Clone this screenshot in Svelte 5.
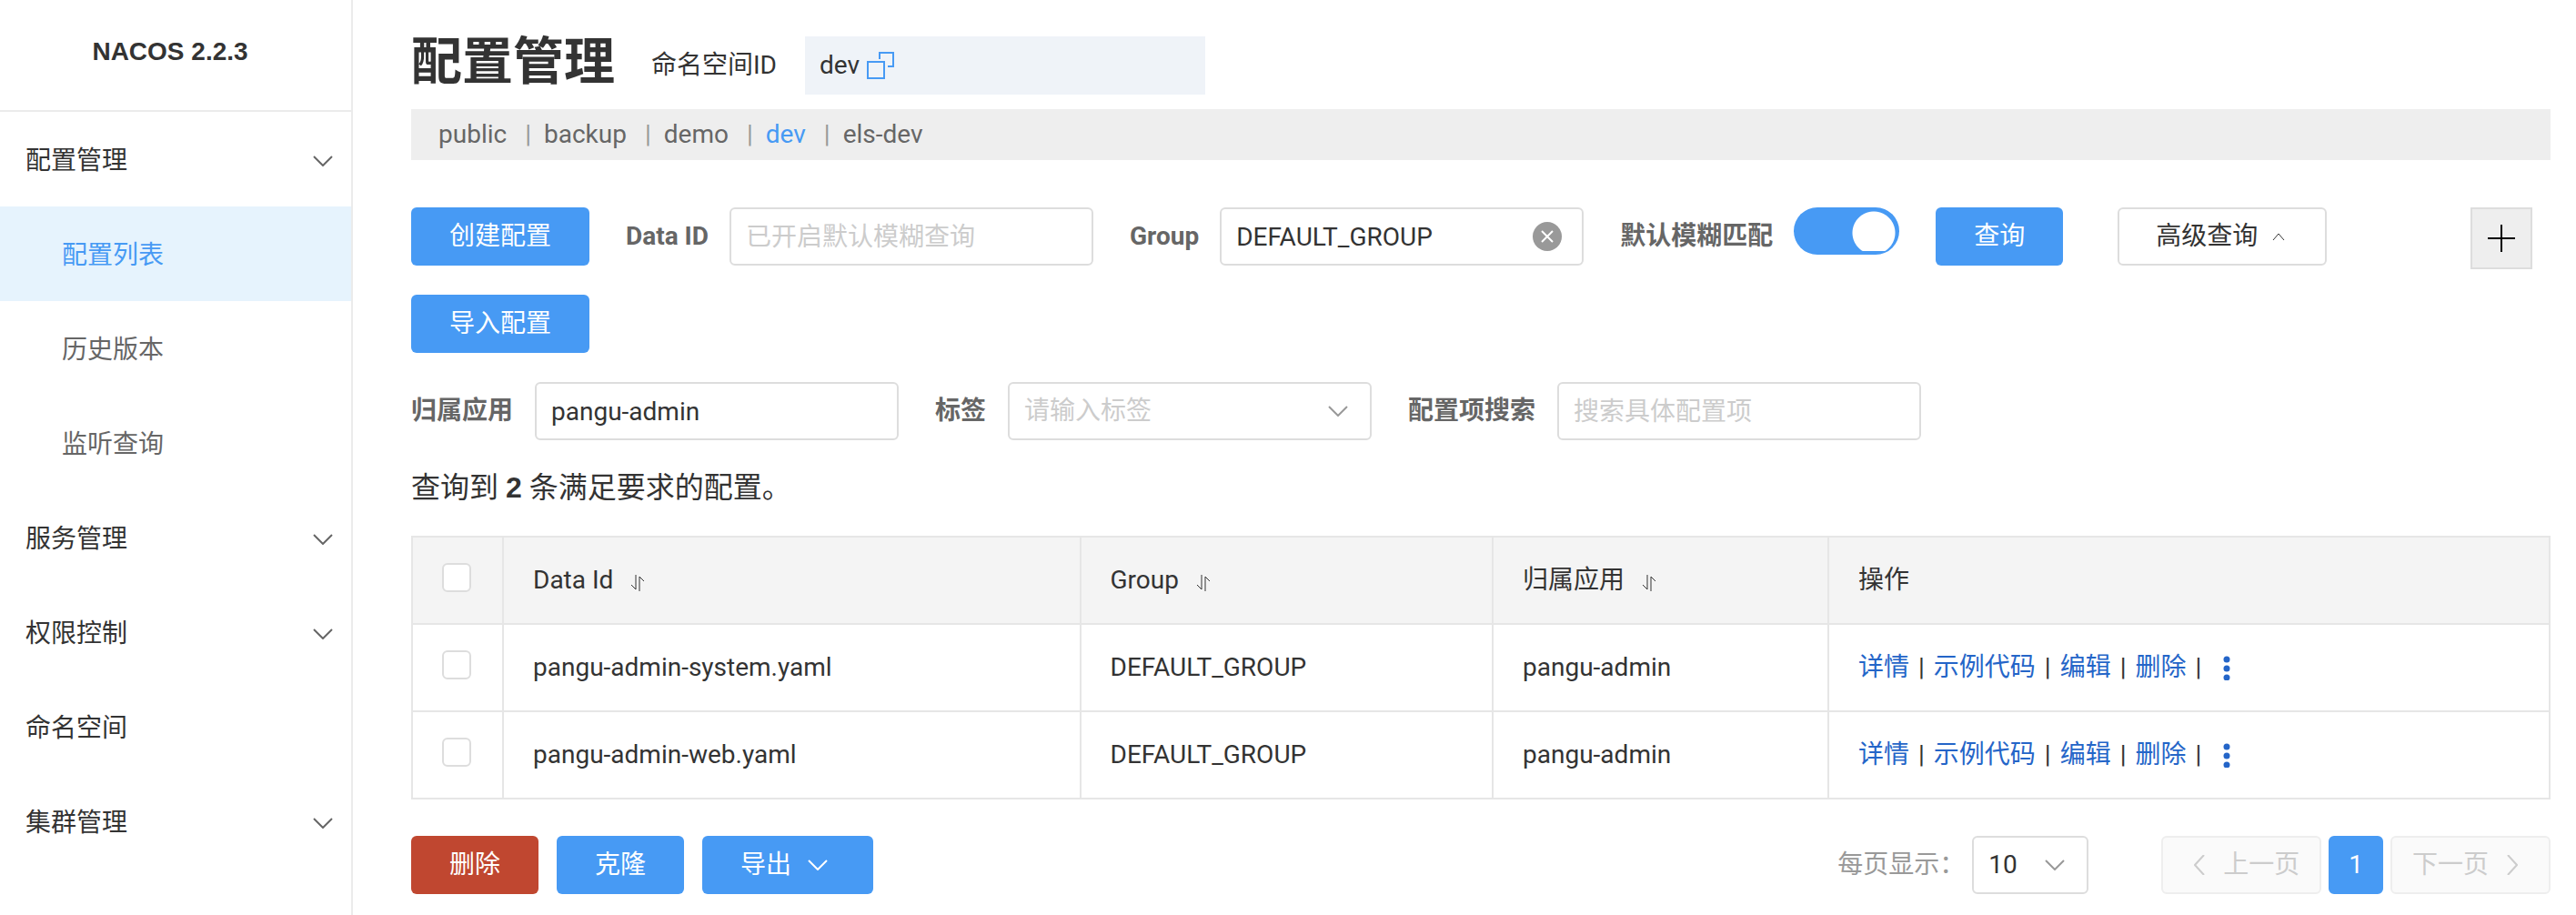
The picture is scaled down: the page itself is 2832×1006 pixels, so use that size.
<script>
  const menu = [
    { label: '配置管理', open: true, children: ['配置列表', '历史版本', '监听查询'] },
    { label: '服务管理', children: [] },
    { label: '权限控制', children: [] },
    { label: '命名空间' },
    { label: '集群管理', children: [] }
  ];
  const activeItem = '配置列表';

  const namespaces = ['public', 'backup', 'demo', 'dev', 'els-dev'];
  const current = 'dev';

  const rows = [
    { dataId: 'pangu-admin-system.yaml', group: 'DEFAULT_GROUP', app: 'pangu-admin' },
    { dataId: 'pangu-admin-web.yaml', group: 'DEFAULT_GROUP', app: 'pangu-admin' }
  ];
  const actions = ['详情', '示例代码', '编辑', '删除'];

  let dataId = $state('');
  let group = $state('DEFAULT_GROUP');
  let app = $state('pangu-admin');
  let detail = $state('');
  let fuzzy = $state(true);
</script>

{#snippet chevron()}
  <svg class="chevron" viewBox="0 0 22 12" aria-hidden="true"><path d="M1 1 L11 11 L21 1" /></svg>
{/snippet}

{#snippet sortIcon()}
  <button class="sort" aria-label="排序">
    <svg viewBox="0 0 16 18" aria-hidden="true"><path d="M6 0 V16 L1 11 M10 18 V2 L15 7" /></svg>
  </button>
{/snippet}

<div class="layout">
  <aside class="sidebar">
    <h1 class="brand">NACOS 2.2.3</h1>
    <nav>
      <ul class="menu">
        {#each menu as item}
          <li>
            <a class="item" href="#menu">
              <span>{item.label}</span>
              {#if item.children}{@render chevron()}{/if}
            </a>
            {#if item.open}
              <ul class="menu">
                {#each item.children as child}
                  <li>
                    <a class="item child" class:active={child === activeItem} href="#menu">{child}</a>
                  </li>
                {/each}
              </ul>
            {/if}
          </li>
        {/each}
      </ul>
    </nav>
  </aside>

  <main>
    <header class="title-row">
      <h2>配置管理</h2>
      <span class="ns-label">命名空间ID</span>
      <div class="ns-box">
        <span>dev</span>
        <button class="copy" aria-label="复制">
          <svg viewBox="0 0 30 30" aria-hidden="true">
            <path d="M1 11 H19 V29 H1 Z M14 8 V1 H29 V16 H23" />
          </svg>
        </button>
      </div>
    </header>

    <nav class="ns-bar">
      {#each namespaces as ns, i}
        {#if i > 0}<span class="bar">|</span>{/if}
        <a href="#ns" class:active={ns === current}>{ns}</a>
      {/each}
    </nav>

    <form class="filters" onsubmit={(e) => e.preventDefault()}>
      <div class="row">
        <div class="stack">
          <button type="button" class="btn primary">创建配置</button>
          <button type="button" class="btn primary">导入配置</button>
        </div>
        <div class="field">
          <label for="data-id">Data ID</label>
          <input id="data-id" class="text" placeholder="已开启默认模糊查询" bind:value={dataId} />
        </div>
        <div class="field">
          <label for="group">Group</label>
          <div class="control">
            <input id="group" class="text" bind:value={group} />
            <button type="button" class="clear" aria-label="清除" onclick={() => (group = '')}>
              <svg viewBox="0 0 32 32" aria-hidden="true">
                <circle cx="16" cy="16" r="16" />
                <path d="M10 10 L22 22 M22 10 L10 22" />
              </svg>
            </button>
          </div>
        </div>
        <div class="field">
          <label for="fuzzy">默认模糊匹配</label>
          <input id="fuzzy" type="checkbox" role="switch" class="switch" bind:checked={fuzzy} />
        </div>
        <button class="btn primary">查询</button>
        <button type="button" class="btn advanced">
          高级查询
          <svg class="caret" viewBox="0 0 14 10" aria-hidden="true"><path d="M1 9 L7 2 L13 9" /></svg>
        </button>
        <button type="button" class="plus" aria-label="新建">
          <svg viewBox="0 0 30 30" aria-hidden="true"><path d="M15 0 V30 M0 15 H30" /></svg>
        </button>
      </div>

      <div class="row second">
        <div class="field">
          <label for="app">归属应用</label>
          <input id="app" class="text" bind:value={app} />
        </div>
        <div class="field">
          <label for="tags">标签</label>
          <div class="control">
            <select id="tags" class="text empty">
              <option>请输入标签</option>
            </select>
            {@render chevron()}
          </div>
        </div>
        <div class="field">
          <label for="detail">配置项搜索</label>
          <input id="detail" class="text" placeholder="搜索具体配置项" bind:value={detail} />
        </div>
      </div>
    </form>

    <p class="count">查询到 <strong>{rows.length}</strong> 条满足要求的配置。</p>

    <table>
      <colgroup>
        <col class="c-check" />
        <col class="c-id" />
        <col class="c-group" />
        <col class="c-app" />
        <col />
      </colgroup>
      <thead>
        <tr>
          <th class="check"><input type="checkbox" aria-label="全选" /></th>
          <th>Data Id {@render sortIcon()}</th>
          <th>Group {@render sortIcon()}</th>
          <th>归属应用 {@render sortIcon()}</th>
          <th>操作</th>
        </tr>
      </thead>
      <tbody>
        {#each rows as row}
          <tr>
            <td class="check"><input type="checkbox" aria-label={row.dataId} /></td>
            <td>{row.dataId}</td>
            <td>{row.group}</td>
            <td>{row.app}</td>
            <td>
              <div class="actions">
                {#each actions as action}
                  <a href="#action">{action}</a><span>|</span>
                {/each}
                <button class="more" aria-label="更多">
                  <svg viewBox="0 0 8 28" aria-hidden="true">
                    <circle cx="4" cy="5" r="3.5" /><circle cx="4" cy="15" r="3.5" /><circle cx="4" cy="25" r="3.5" />
                  </svg>
                </button>
              </div>
            </td>
          </tr>
        {/each}
      </tbody>
    </table>

    <footer>
      <button class="btn danger">删除</button>
      <button class="btn primary">克隆</button>
      <button class="btn primary export">导出 {@render chevron()}</button>
      <div class="pager">
        <label for="size">每页显示：</label>
        <div class="control size">
          <select id="size" class="text"><option>10</option></select>
          {@render chevron()}
        </div>
        <button class="page prev" disabled>
          <svg viewBox="0 0 12 22" aria-hidden="true"><path d="M11 0 L1 11 L11 22" /></svg>
          上一页
        </button>
        <button class="page current" aria-current="page">1</button>
        <button class="page next" disabled>
          下一页
          <svg viewBox="0 0 12 22" aria-hidden="true"><path d="M1 0 L11 11 L1 22" /></svg>
        </button>
      </div>
    </footer>
  </main>
</div>

<style>
  :global(body) {
    background: #fff;
  }

  .layout,
  .layout * {
    box-sizing: border-box;
  }

  .layout {
    display: flex;
    min-height: 100vh;
    color: #333;
    font: 400 28px/36px Roboto, 'Noto Sans CJK SC', sans-serif;
  }

  button,
  input,
  select {
    margin: 0;
    padding: 0;
    border: 0;
    background: none;
    color: inherit;
    font: inherit;
  }

  button {
    cursor: pointer;
  }

  a {
    color: inherit;
    text-decoration: none;
  }

  svg {
    display: block;
    fill: none;
    stroke: currentColor;
    stroke-width: 2px;
  }

  .chevron {
    flex: none;
    width: 22px;
    height: 12px;
  }

  /* Sidebar */
  .sidebar {
    flex: none;
    width: 388px;
    border-right: 2px solid #ebebeb;
  }

  .brand {
    margin: 0;
    padding: 39px 12px 46px 0;
    border-bottom: 2px solid #ebebeb;
    font-family: 'Liberation Sans', sans-serif;
    font-size: 28px;
    font-weight: 700;
    text-align: center;
  }

  .menu {
    margin: 0;
    padding: 0;
    list-style: none;
  }

  .item {
    display: flex;
    align-items: center;
    justify-content: space-between;
    height: 104px;
    padding: 4px 20px 0 28px;
  }

  .item .chevron {
    color: #666;
  }

  .child {
    padding-left: 68px;
    color: #666;
  }

  .child.active {
    background: #e6f3fd;
    color: #479af4;
  }

  /* Heading */
  main {
    flex: 1;
    min-width: 0;
    padding: 40px 28px 20px 64px;
  }

  .title-row {
    display: flex;
    align-items: center;
    height: 64px;
  }

  h2 {
    margin: 0 40px 8px 0;
    font-size: 56px;
    line-height: 64px;
    font-weight: 700;
  }

  .ns-label {
    margin-right: 31px;
  }

  .ns-box {
    display: flex;
    align-items: center;
    gap: 8px;
    width: 440px;
    height: 64px;
    padding: 0 16px;
    background: #eff3f8;
  }

  .copy {
    color: #479af4;
  }

  .copy svg {
    width: 30px;
    height: 30px;
  }

  .ns-bar {
    display: flex;
    align-items: center;
    height: 56px;
    margin-top: 16px;
    padding: 0 30px;
    background: #eee;
    color: #666;
  }

  .bar {
    margin: 0 14px 0 20px;
    color: #999;
  }

  .ns-bar .active {
    color: #479af4;
  }

  /* Filters */
  .filters {
    margin-top: 52px;
  }

  .row {
    display: flex;
    align-items: flex-start;
    gap: 40px;
  }

  .stack {
    display: grid;
    gap: 32px;
  }

  .field {
    display: flex;
    gap: 23px;
  }

  .second {
    margin-top: 32px;
  }

  .second .field {
    gap: 24px;
  }

  .field label {
    color: #666;
    font-weight: 700;
    line-height: 64px;
  }

  .text {
    width: 400px;
    height: 64px;
    padding: 0 16px;
    border: 2px solid #ddd;
    border-radius: 6px;
    background: #fff;
    color: #333;
    appearance: none;
  }

  .text::placeholder,
  .text.empty {
    color: #ccc;
    opacity: 1;
  }

  .control {
    display: grid;
    align-items: center;
  }

  .control > * {
    grid-area: 1 / 1;
  }

  .control .chevron {
    justify-self: end;
    margin-right: 26px;
    color: #999;
    pointer-events: none;
  }

  .clear {
    justify-self: end;
    margin-right: 24px;
  }

  .clear svg {
    width: 32px;
    height: 32px;
    stroke: #fff;
  }

  .clear circle {
    fill: #999;
    stroke: none;
  }

  .switch {
    display: flex;
    justify-content: flex-end;
    width: 116px;
    height: 52px;
    padding: 4px;
    border-radius: 26px;
    background: #479af4;
    appearance: none;
    cursor: pointer;
  }

  .switch::before {
    content: '';
    width: 48px;
    height: 44px;
    background: radial-gradient(circle at 24px 24px, #fff 23px, transparent 24px);
  }

  .btn {
    display: flex;
    align-items: center;
    justify-content: center;
    gap: 18px;
    height: 64px;
    padding: 0 42px;
    border-radius: 6px;
  }

  .primary {
    background: #479af4;
    color: #fff;
  }

  .danger {
    background: #c04730;
    color: #fff;
  }

  .export {
    padding-right: 50px;
  }

  .advanced {
    gap: 16px;
    margin-left: 20px;
    padding: 0 44px 0 40px;
    border: 2px solid #ddd;
  }

  .caret {
    width: 14px;
    height: 10px;
    stroke-width: 1px;
  }

  .plus {
    display: grid;
    place-items: center;
    width: 68px;
    height: 68px;
    margin: 0 20px 0 auto;
    border: 2px solid #ddd;
    background: #eee;
    color: #000;
  }

  .plus svg {
    width: 30px;
    height: 30px;
  }

  /* Result table */
  .count {
    margin: 32px 0;
    font-size: 32px;
    line-height: 41px;
  }

  .count strong {
    font-family: 'Liberation Sans', sans-serif;
  }

  table {
    width: 100%;
    table-layout: fixed;
    border-collapse: collapse;
  }

  .c-check {
    width: 100px;
  }

  .c-id {
    width: 27%;
  }

  .c-group {
    width: 19.3%;
  }

  .c-app {
    width: 15.7%;
  }

  th,
  td {
    height: 96px;
    padding: 0 32px;
    border: 2px solid #e6e6e6;
    font-weight: 400;
    text-align: left;
  }

  th {
    background: #f4f4f4;
  }

  .check input {
    display: block;
    width: 32px;
    height: 32px;
    margin: 0 0 6px 0;
    border: 2px solid #ddd;
    border-radius: 6px;
    background: #fff;
    appearance: none;
  }

  .sort {
    display: inline-block;
    margin-left: 12px;
    vertical-align: -3px;
  }

  .sort svg {
    width: 16px;
    height: 18px;
    stroke-width: 1px;
  }

  .actions {
    display: flex;
    align-items: center;
    gap: 10px;
  }

  .actions a,
  .more {
    color: #2465c8;
  }

  .more {
    margin-left: 14px;
  }

  .more svg {
    width: 8px;
    height: 28px;
    fill: currentColor;
    stroke: none;
  }

  /* Bottom bar */
  footer {
    display: flex;
    gap: 20px;
    margin-top: 40px;
  }

  .pager {
    display: flex;
    align-items: center;
    gap: 8px;
    margin-left: auto;
  }

  .pager label {
    color: #999;
  }

  .size {
    width: 128px;
    margin-right: 72px;
  }

  .size .text {
    width: 100%;
  }

  .page {
    display: flex;
    align-items: center;
    justify-content: center;
    gap: 20px;
    height: 64px;
    padding: 0 20px;
    border: 2px solid #eee;
    border-radius: 6px;
    background: #fafafa;
    color: #ccc;
  }

  .prev {
    padding: 0 22px 0 34px;
  }

  .next {
    padding: 0 34px 0 22px;
  }

  .page svg {
    width: 12px;
    height: 22px;
  }

  .page.current {
    border-color: #479af4;
    background: #479af4;
    color: #fff;
  }
</style>
